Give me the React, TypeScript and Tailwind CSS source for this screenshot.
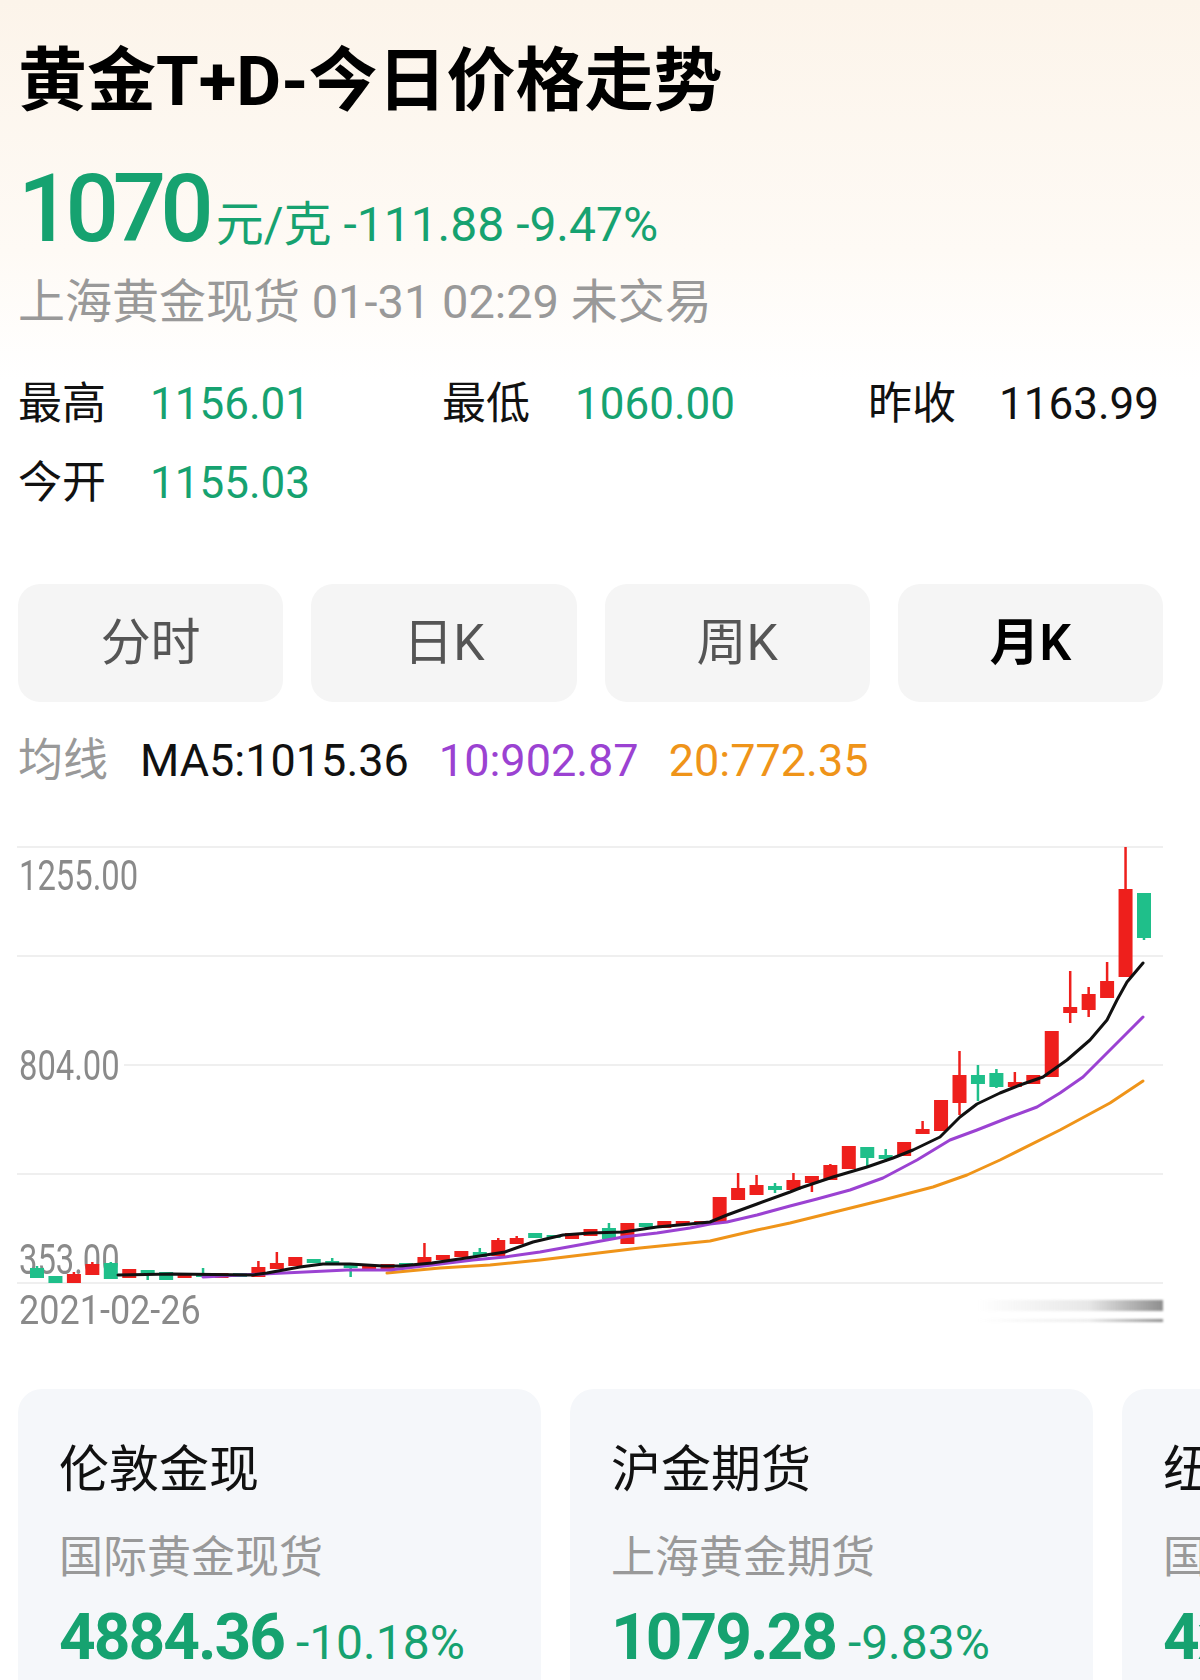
import React from "react";

type Candle = [number, number, number, number, "r" | "g"]; // bodyTop, bodyBottom, wickTop, wickBottom (page y)

const candles: Candle[] = [
  [1268, 1278, 1266, 1278, "g"],
  [1276, 1283, 1276, 1283, "g"],
  [1274, 1283, 1272, 1283, "r"],
  [1264, 1275, 1262, 1275, "r"],
  [1263, 1279, 1262, 1279, "g"],
  [1269, 1278, 1269, 1278, "r"],
  [1270, 1273, 1270, 1280, "g"],
  [1272, 1280, 1272, 1280, "g"],
  [1274, 1278, 1274, 1278, "r"],
  [1275, 1277, 1268, 1277, "g"],
  [1273, 1278, 1273, 1278, "r"],
  [1273, 1277, 1273, 1277, "g"],
  [1267, 1277, 1261, 1277, "r"],
  [1263, 1269, 1252, 1269, "r"],
  [1257, 1266, 1257, 1266, "r"],
  [1259, 1263, 1259, 1263, "g"],
  [1261, 1264, 1258, 1264, "g"],
  [1264, 1268, 1264, 1277, "g"],
  [1265, 1271, 1265, 1271, "r"],
  [1264, 1270, 1264, 1270, "r"],
  [1263, 1267, 1263, 1267, "g"],
  [1257, 1266, 1243, 1266, "r"],
  [1255, 1260, 1255, 1260, "r"],
  [1251, 1257, 1251, 1257, "r"],
  [1252, 1257, 1248, 1257, "g"],
  [1240, 1256, 1238, 1256, "r"],
  [1238, 1244, 1236, 1244, "r"],
  [1233, 1238, 1233, 1238, "g"],
  [1235, 1238, 1235, 1238, "g"],
  [1233, 1239, 1233, 1239, "r"],
  [1229, 1236, 1229, 1236, "r"],
  [1228, 1239, 1223, 1239, "g"],
  [1223, 1244, 1223, 1244, "r"],
  [1223, 1227, 1223, 1230, "g"],
  [1221, 1228, 1221, 1228, "r"],
  [1221, 1225, 1221, 1225, "r"],
  [1221, 1224, 1221, 1224, "r"],
  [1197, 1223, 1197, 1223, "r"],
  [1188, 1200, 1173, 1200, "r"],
  [1185, 1195, 1175, 1195, "r"],
  [1186, 1190, 1183, 1193, "g"],
  [1180, 1190, 1173, 1190, "r"],
  [1176, 1183, 1176, 1192, "r"],
  [1165, 1180, 1164, 1180, "r"],
  [1146, 1169, 1146, 1169, "r"],
  [1147, 1158, 1147, 1167, "g"],
  [1155, 1159, 1149, 1162, "g"],
  [1142, 1156, 1142, 1156, "r"],
  [1129, 1134, 1121, 1134, "r"],
  [1100, 1131, 1100, 1131, "r"],
  [1075, 1103, 1051, 1115, "r"],
  [1075, 1084, 1065, 1101, "g"],
  [1073, 1087, 1069, 1088, "g"],
  [1082, 1087, 1072, 1087, "r"],
  [1075, 1084, 1075, 1084, "r"],
  [1031, 1077, 1031, 1077, "r"],
  [1007, 1013, 971, 1023, "r"],
  [994, 1010, 987, 1017, "r"],
  [981, 998, 962, 998, "r"],
  [889, 977, 847, 977, "r"],
  [893, 938, 893, 940, "g"],
];

const ma5: [number, number][] = [
  [118, 1275], [173, 1274], [253, 1275], [267, 1273], [300, 1267], [323, 1264], [350, 1264],
  [383, 1266], [400, 1266], [432, 1263], [473, 1257], [505, 1252], [533, 1242], [563, 1235],
  [590, 1233], [623, 1232], [657, 1227], [690, 1224], [710, 1222], [727, 1215], [757, 1204],
  [790, 1192], [800, 1188], [833, 1177], [867, 1167], [893, 1158], [913, 1150], [940, 1137],
  [960, 1117], [977, 1104], [1000, 1093], [1020, 1085], [1043, 1077], [1067, 1060],
  [1090, 1040], [1107, 1020], [1117, 1000], [1127, 982], [1143, 963],
];

const ma10: [number, number][] = [
  [203, 1277], [263, 1274], [347, 1270], [390, 1270], [432, 1265], [473, 1260], [505, 1257],
  [540, 1252], [590, 1243], [623, 1237], [657, 1233], [690, 1228], [710, 1224], [727, 1222],
  [757, 1215], [790, 1206], [817, 1199], [850, 1190], [883, 1178], [917, 1160], [950, 1140],
  [977, 1130], [1010, 1117], [1037, 1107], [1060, 1093], [1083, 1077], [1107, 1053],
  [1127, 1033], [1143, 1017],
];

const ma20: [number, number][] = [
  [387, 1273], [440, 1268], [490, 1265], [540, 1260], [590, 1254], [640, 1248], [690, 1243],
  [710, 1241], [757, 1230], [790, 1223], [883, 1200], [933, 1187], [967, 1175], [1000, 1160],
  [1060, 1130], [1110, 1103], [1143, 1081],
];

const TOP = 846;
const pts = (arr: [number, number][]) => arr.map(([x, y]) => `${x},${y - TOP}`).join(" ");

const GREEN = "#16a270";

function Chart() {
  return (
    <div className="relative h-[440px] w-[1200px]">
      <svg className="absolute left-0 top-0" width="1200" height="440" viewBox="0 0 1200 440">
        <line x1="17" x2="1163" y1="1" y2="1" stroke="#efefef" strokeWidth="2" />
        <line x1="17" x2="1163" y1="110" y2="110" stroke="#efefef" strokeWidth="2" />
        <line x1="124" x2="1163" y1="219" y2="219" stroke="#efefef" strokeWidth="2" />
        <line x1="17" x2="1163" y1="328" y2="328" stroke="#efefef" strokeWidth="2" />
        <line x1="17" x2="1163" y1="437" y2="437" stroke="#efefef" strokeWidth="2" />
      </svg>
      <div className="absolute left-[19px] top-[8px] text-[42px] leading-[44px] text-[#8a8a8a] origin-left scale-x-[0.78]">1255.00</div>
      <div className="absolute left-[19px] top-[198px] text-[42px] leading-[44px] text-[#8a8a8a] origin-left scale-x-[0.78] bg-white">804.00</div>
      <div className="absolute left-[19px] top-[392px] text-[42px] leading-[44px] text-[#8a8a8a] origin-left scale-x-[0.78]">353.00</div>
      <svg className="absolute left-0 top-0" width="1200" height="440" viewBox="0 0 1200 440">
        {candles.map(([bt, bb, wt, wb, c], i) => {
          const cx = 37 + i * 18.45;
          const col = c === "r" ? "#ee1f1c" : "#1fbf8a";
          return (
            <g key={i}>
              <line x1={cx} x2={cx} y1={wt - TOP} y2={wb - TOP} stroke={col} strokeWidth="2.5" />
              <rect x={cx - 7} y={bt - TOP} width="14" height={Math.max(bb - bt, 2)} fill={col} />
            </g>
          );
        })}
        <polyline points={pts(ma20)} fill="none" stroke="#ef9419" strokeWidth="3" strokeLinejoin="round" strokeLinecap="round" />
        <polyline points={pts(ma10)} fill="none" stroke="#9b42d2" strokeWidth="3" strokeLinejoin="round" strokeLinecap="round" />
        <polyline points={pts(ma5)} fill="none" stroke="#111111" strokeWidth="3" strokeLinejoin="round" strokeLinecap="round" />
      </svg>
    </div>
  );
}

const cards = [
  { name: "伦敦金现", sub: "国际黄金现货", price: "4884.36", pct: "-10.18%" },
  { name: "沪金期货", sub: "上海黄金期货", price: "1079.28", pct: "-9.83%" },
  { name: "纽约金", sub: "国际黄金期货", price: "4xxx", pct: "" },
];

export default function App() {
  const font = { fontFamily: "Roboto, 'Noto Sans CJK SC', sans-serif" };
  return (
    <div
      style={font}
      className="relative h-[1680px] w-[1200px] overflow-hidden bg-[linear-gradient(180deg,#fcf4ea_0px,#fefaf5_250px,#ffffff_380px)] text-black"
    >
      <div className="pl-[18px] w-[1163px]">
        <h1 className="pt-[42px] text-[69px] leading-[80px] font-bold text-black">黄金T+D-今日价格走势</h1>

        <div className="mt-[40px] flex items-baseline" style={{ color: GREEN }}>
          <span className="text-[94px] leading-none font-medium tracking-[-6px]">1070</span>
          <span className="ml-[8px] text-[48px] leading-none">元/克 -111.88 -9.47%</span>
        </div>

        <div className="mt-[18px] text-[47px] leading-[56px] text-[#999999]">上海黄金现货 01-31 02:29 未交易</div>

        <div className="mt-[46px] grid grid-cols-[424px_426px_1fr] gap-y-[23px] text-[44px] leading-[56px]">
          <div className="flex"><span className="w-[132px] text-[#111]">最高</span><span style={{ color: GREEN }}>1156.01</span></div>
          <div className="flex"><span className="w-[133px] text-[#111]">最低</span><span style={{ color: GREEN }}>1060.00</span></div>
          <div className="flex"><span className="w-[131px] text-[#111]">昨收</span><span className="text-[#111]">1163.99</span></div>
          <div className="flex"><span className="w-[132px] text-[#111]">今开</span><span style={{ color: GREEN }}>1155.03</span></div>
        </div>

        <div className="mt-[73px] flex gap-[28px]">
          {["分时", "日K", "周K", "月K"].map((t, i) => (
            <div
              key={t}
              className={`flex h-[118px] flex-1 items-center justify-center rounded-[22px] bg-[#f5f5f5] text-[50px] ${
                i === 3 ? "font-semibold text-black" : "text-[#555555]"
              }`}
            >
              {t}
            </div>
          ))}
        </div>

        <div className="mt-[31px] flex text-[45px] leading-[56px]">
          <span className="text-[#999999]">均线</span>
          <span className="ml-[32px] text-[#111]">MA5:1015.36</span>
          <span className="ml-[30px] text-[#9b42d2]">10:902.87</span>
          <span className="ml-[30px] text-[#ef9419]">20:772.35</span>
        </div>
      </div>

      <div className="mt-[57px]">
        <Chart />
      </div>

      <div className="mt-[3px] flex w-[1163px] items-center justify-between pl-[19px]">
        <span className="text-[40px] leading-[44px] text-[#8a8a8a] origin-left scale-x-[0.9]">2021-02-26</span>
        <div className="flex w-[186px] flex-col gap-[8px] blur-[1px]">
          <div className="h-[11px] w-full bg-[linear-gradient(90deg,rgba(160,160,160,0)_0%,rgba(160,160,160,0.25)_60%,#8e8e8e_100%)]" />
          <div className="h-[3px] w-full bg-[linear-gradient(90deg,rgba(160,160,160,0)_0%,rgba(160,160,160,0.2)_60%,#8e8e8e_100%)]" />
        </div>
      </div>

      <div className="mt-[56px] flex gap-[29px] pl-[18px]">
        {cards.map((c) => (
          <div key={c.name} className="h-[330px] w-[523px] shrink-0 rounded-[24px] bg-[#f5f7fa] pl-[41px] pt-[51px]">
            <div className="text-[50px] leading-[60px] text-[#111]">{c.name}</div>
            <div className="mt-[30px] text-[44px] leading-[56px] text-[#999999]">{c.sub}</div>
            <div className="mt-[20px] flex items-baseline" style={{ color: GREEN }}>
              <span className="text-[64px] leading-none font-bold tracking-[-2px]">{c.price}</span>
              <span className="ml-[12px] text-[48px] leading-none">{c.pct}</span>
            </div>
          </div>
        ))}
      </div>
    </div>
  );
}
